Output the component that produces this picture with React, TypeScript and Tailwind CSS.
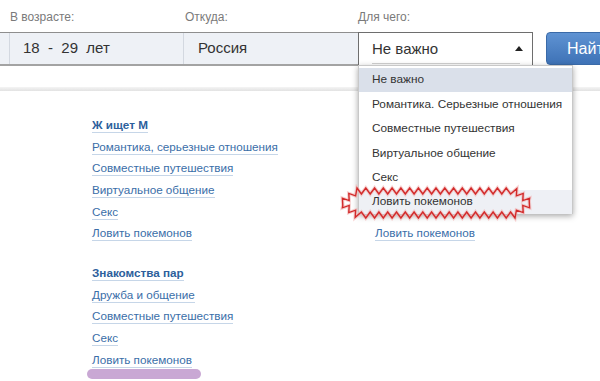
import React from "react";

type Pt = [number, number];

function zigzagPath(poly: Pt[], step: number, amp: number): string {
  const out: Pt[] = [];
  let k = 0;
  for (let e = 0; e < poly.length; e++) {
    const p = poly[e];
    const q = poly[(e + 1) % poly.length];
    const dx = q[0] - p[0];
    const dy = q[1] - p[1];
    const L = Math.hypot(dx, dy);
    const n = Math.max(2, Math.round(L / step));
    const nx = dy / L;
    const ny = -dx / L;
    for (let i = 0; i < n; i++) {
      const t = i / n;
      const s = k % 2 === 0 ? amp : -amp;
      out.push([p[0] + dx * t + nx * s, p[1] + dy * t + ny * s]);
      k++;
    }
  }
  return "M" + out.map((p) => `${p[0].toFixed(1)} ${p[1].toFixed(1)}`).join(" L") + " Z";
}

const Link = ({ children, bold }: { children: React.ReactNode; bold?: boolean }) => (
  <span
    className={`text-[11.7px] leading-[14px] border-b border-[#c6d6e8] ${
      bold ? "font-bold text-[#2d5f9c]" : "text-[#3a6ea8]"
    }`}
  >
    {children}
  </span>
);

const Row = ({ children }: { children?: React.ReactNode }) => (
  <div className="h-[21.6px] flex items-center">{children}</div>
);

export default function App() {
  const group1 = [
    "Романтика, серьезные отношения",
    "Совместные путешествия",
    "Виртуальное общение",
    "Секс",
    "Ловить покемонов",
  ];
  const group2 = ["Дружба и общение", "Совместные путешествия", "Секс", "Ловить покемонов"];
  const options = [
    "Не важно",
    "Романтика. Серьезные отношения",
    "Совместные путешествия",
    "Виртуальное общение",
    "Секс",
    "Ловить покемонов",
  ];

  const ox = 330;
  const oy = 180;
  const poly: Pt[] = [
    [357 - ox, 191 - oy],
    [515 - ox, 191 - oy],
    [531 - ox, 203 - oy],
    [515 - ox, 215 - oy],
    [357 - ox, 215 - oy],
    [341 - ox, 203 - oy],
  ];
  const zz = zigzagPath(poly, 4.4, 3);

  return (
    <div className="relative w-[600px] h-[381px] overflow-hidden bg-white font-['Liberation_Sans',Arial,sans-serif]">
      {/* labels */}
      <div className="flex h-[32px] pt-[10px] text-[12px] leading-[14px] text-[#7a7a7a]">
        <div className="w-[184px] shrink-0 pl-[10px]">В возрасте:</div>
        <div className="w-[174px] shrink-0 pl-[1px]">Откуда:</div>
        <div className="w-[175px] shrink-0">Для чего:</div>
      </div>

      {/* bar */}
      <div className="flex h-[34px]">
        <div className="flex w-[358px] shrink-0 bg-[#eef1f6] border-t border-[#8e8e8e] border-b-2 border-b-[#a3a3a3] text-[15px] text-[#333]">
          <div className="w-[10px] shrink-0 border-r border-[#d3d8e0]" />
          <div className="w-[174px] shrink-0 flex items-center pl-[13px] border-r border-[#d3d8e0] whitespace-pre">
            18  -  29  лет
          </div>
          <div className="flex-1 flex items-center pl-[14px]">Россия</div>
        </div>
        <div className="relative w-[175px] shrink-0 bg-white border-t border-l border-r border-[#6e6e6e] flex items-center pl-[13px] text-[15px] text-[#333]">
          <span>Не важно</span>
          <svg className="absolute left-[156px] top-[13px]" width="8" height="5" viewBox="0 0 8 5">
            <path d="M0 5 L4 0 L8 5 Z" fill="#222" />
          </svg>
          <div className="absolute left-[13px] right-[12px] bottom-[2px] h-px bg-[#d0d0d0]" />
        </div>
        <div className="w-[13px] shrink-0" />
        <div className="w-[70px] shrink-0 h-[33px] rounded-[4px] bg-gradient-to-b from-[#5f93d3] to-[#3e72b6] border border-[#3a6aa8] flex items-center pl-[20px] text-[16px] text-white">
          Найти
        </div>
      </div>

      {/* separator */}
      <div className="h-[21px]" />
      <div className="h-[4px] bg-gradient-to-b from-[#f4f4f4] to-[#e2e2e2]" />

      {/* columns */}
      <div className="flex pt-[24px] pl-[92px]">
        <div className="w-[283px] shrink-0 flex flex-col">
          <Row>
            <Link bold>Ж ищет М</Link>
          </Row>
          {group1.map((t, i) => (
            <Row key={i}>
              <Link>{t}</Link>
            </Row>
          ))}
          <div className="h-[18.4px]" />
          <Row>
            <Link bold>Знакомства пар</Link>
          </Row>
          {group2.map((t, i) => (
            <Row key={i}>
              <Link>{t}</Link>
            </Row>
          ))}
          <div className="-mt-[2px] -ml-[5px] w-[114px] h-[10px] rounded-full bg-[#c9a8d4]" />
        </div>
        <div className="flex flex-col">
          <Row />
          <Row />
          <Row />
          <Row />
          <Row />
          <Row>
            <Link>Ловить покемонов</Link>
          </Row>
        </div>
      </div>

      {/* dropdown */}
      <div className="absolute left-[358px] top-[65px] w-[215px] h-[149px] bg-white border border-[#c8c8c8] shadow-[0_2px_6px_rgba(0,0,0,0.35)] pt-[2px]">
        {options.map((o, i) => (
          <div
            key={i}
            className={`h-[24.4px] flex items-center pl-[13px] text-[11.8px] text-[#333] ${
              i === 0 ? "bg-[#dae0ea]" : i === 5 ? "bg-[#eef0f5]" : ""
            }`}
          >
            {o}
          </div>
        ))}
      </div>

      {/* red zigzag annotation */}
      <svg className="absolute left-[330px] top-[180px]" width="210" height="45" viewBox="0 0 210 45">
        <path d={zz} fill="none" stroke="#f2b0b0" strokeWidth="3.5" strokeLinejoin="miter" opacity="0.6" />
        <path d={zz} fill="none" stroke="#d22b2b" strokeWidth="1.4" strokeLinejoin="miter" />
      </svg>
    </div>
  );
}
